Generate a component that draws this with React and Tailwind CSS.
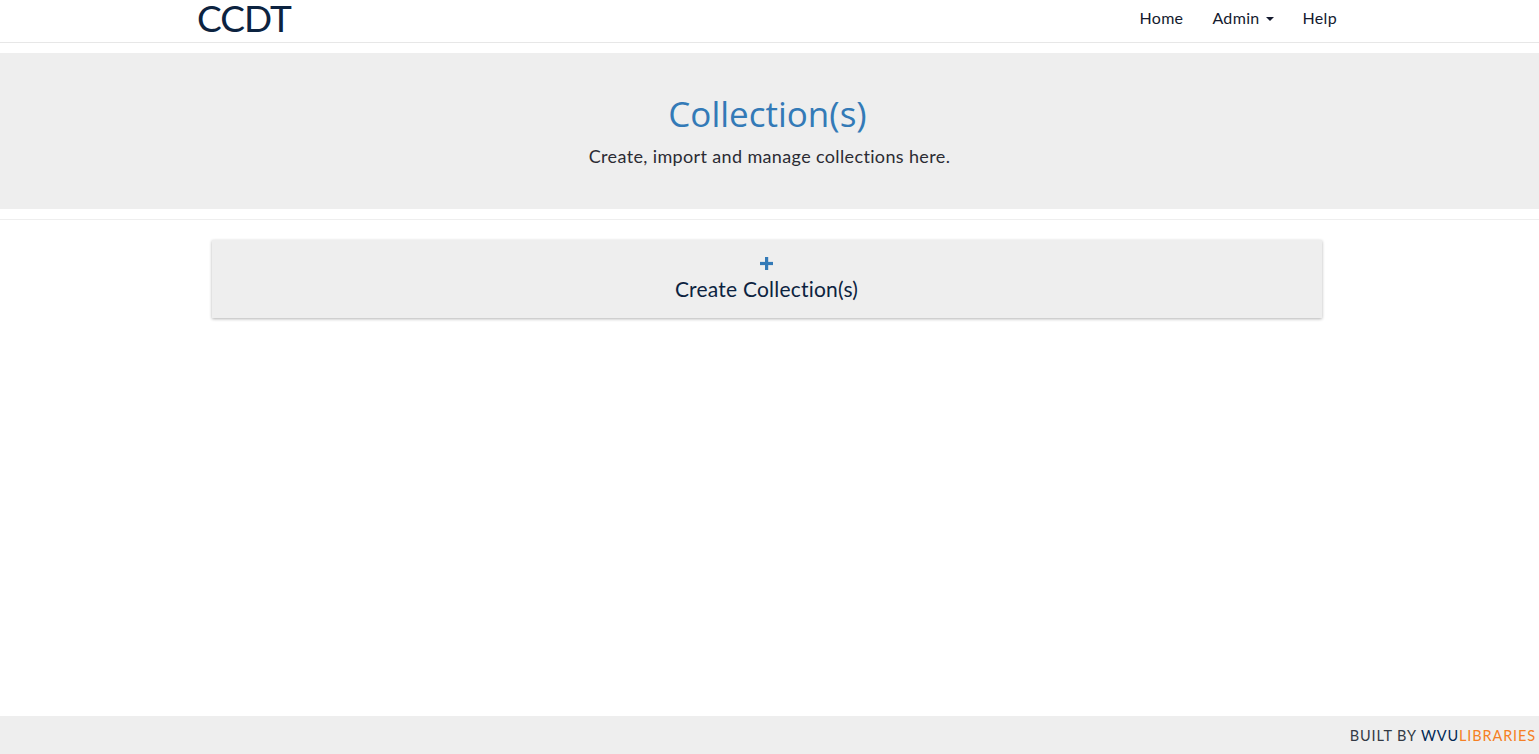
import React from "react";

const font = { fontFamily: '"Lato", "Noto Sans", sans-serif' };

export default function App() {
  return (
    <div className="min-h-screen flex flex-col bg-white" style={font}>
      <nav className="h-[43px] border-b border-[#e7e7e7] bg-white">
        <div className="w-[1145px] mx-auto flex items-start justify-between h-full">
          <a className="block h-[36px] text-[37px] leading-[36px] text-[#0c2340] tracking-tight">CCDT</a>
          <ul className="flex h-[36px] items-center gap-[29px] text-[16px] tracking-[0.02em] text-[#141a2e] pr-[5px]">
            <li>Home</li>
            <li className="flex items-center gap-[6px]">
              Admin
              <span className="w-0 h-0 border-l-[4px] border-r-[4px] border-t-[4px] border-l-transparent border-r-transparent border-t-[#141a2e] mt-[2px]"></span>
            </li>
            <li>Help</li>
          </ul>
        </div>
      </nav>

      <header className="mt-[10px] h-[156px] bg-[#eeeeee] flex flex-col items-center justify-center">
        <h1 className="text-[35px] leading-none text-[#337ab7] mt-[4px] -ml-[4px]" style={{ fontFamily: '"Open Sans", "Noto Sans", sans-serif' }}>Collection(s)</h1>
        <p className="text-[18px] tracking-[0.02em] text-[#2b2b33] mt-[12px]">Create, import and manage collections here.</p>
      </header>

      <div className="mt-[10px] border-t border-[#eeeeee]"></div>

      <main className="flex-1 pt-[20px] flex justify-center pr-[6px]">
        <button className="w-[1110px] h-[78px] flex flex-col items-center justify-center bg-[#eeeeee] shadow-[0_1px_3px_rgba(0,0,0,0.3)]">
          <svg width="13" height="13" viewBox="0 0 13 13" className="mb-[6px] mt-[2px]">
            <rect x="5" y="0" width="3.2" height="13" fill="#337ab7" />
            <rect x="0" y="4.9" width="13" height="3.2" fill="#337ab7" />
          </svg>
          <span className="text-[21px] tracking-[0.01em] text-[#0c2340] leading-tight">Create Collection(s)</span>
        </button>
      </main>

      <footer className="h-[38px] bg-[#eeeeee] flex items-center justify-end pr-[3px] pt-[2px] text-[14.5px] tracking-[0.06em]">
        <span className="text-[#333a45]">BUILT BY&nbsp;</span>
        <span className="text-[#002855]">WVU</span>
        <span className="text-[#f58025]">LIBRARIES</span>
      </footer>
    </div>
  );
}
